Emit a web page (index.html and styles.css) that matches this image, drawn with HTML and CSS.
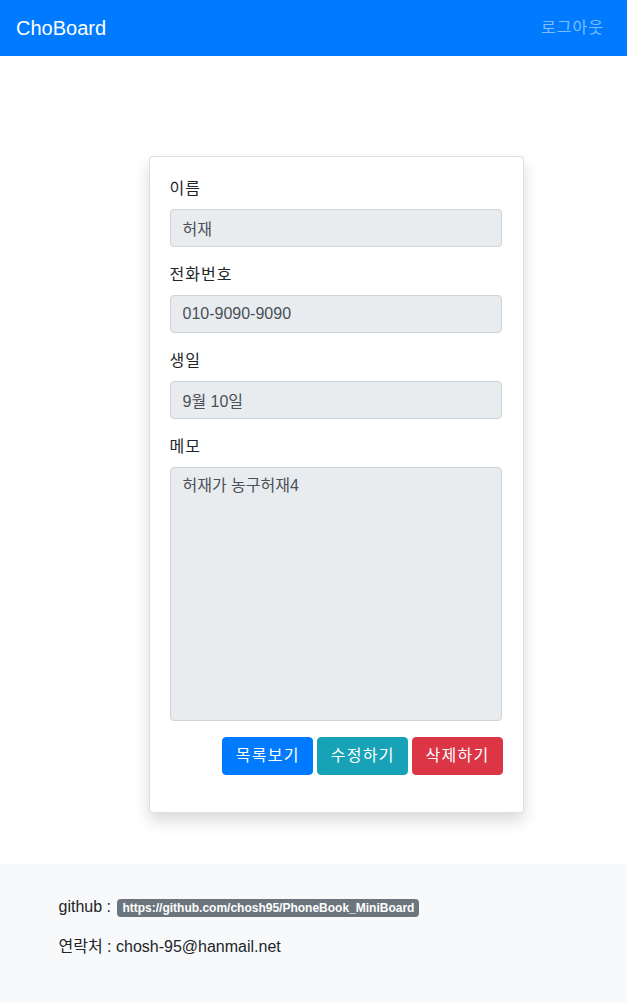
FILE: index.html
```html
<!DOCTYPE html>
<html lang="ko">
<head>
<meta charset="utf-8">
<title>ChoBoard</title>
<link rel="stylesheet" href="styles.css">
</head>
<body>
<nav class="navbar">
  <a class="brand" href="#">ChoBoard</a>
  <a class="nav-link" href="#">로그아웃</a>
</nav>

<main class="container">
  <div class="card">
    <div class="card-body">
      <div class="form-group">
        <label class="label">이름</label>
        <input class="form-control" type="text" value="허재" readonly>
      </div>
      <div class="form-group">
        <label class="label">전화번호</label>
        <input class="form-control" type="text" value="010-9090-9090" readonly>
      </div>
      <div class="form-group">
        <label class="label">생일</label>
        <input class="form-control" type="text" value="9월 10일" readonly>
      </div>
      <div class="form-group">
        <label class="label">메모</label>
        <textarea class="form-control memo" rows="10" readonly>허재가 농구허재4</textarea>
      </div>
      <div class="actions">
        <a class="btn btn-primary" href="#">목록보기</a>
        <a class="btn btn-info" href="#">수정하기</a>
        <a class="btn btn-danger" href="#">삭제하기</a>
      </div>
    </div>
  </div>
</main>

<footer class="footer">
  <div class="footer-inner">
    <p class="footer-line">github : <span class="badge">https://github.com/chosh95/PhoneBook_MiniBoard</span></p>
    <p class="footer-line">연락처 : chosh-95@hanmail.net</p>
  </div>
</footer>
</body>
</html>
```

FILE: styles.css
```css
* { box-sizing: border-box; }

html, body {
  margin: 0;
  padding: 0;
}

body {
  font-family: "Liberation Sans", "Noto Sans CJK KR", sans-serif;
  font-size: 16px;
  line-height: 1.5;
  color: #212529;
  background: #fff;
}

a { text-decoration: none; }

.navbar {
  display: flex;
  justify-content: space-between;
  align-items: center;
  background: #007bff;
  padding: 8px 16px;
  height: 56px;
}

.brand {
  color: #fff;
  font-size: 20px;
  line-height: 30px;
  padding: 5px 0;
}

.nav-link {
  color: rgba(255, 255, 255, 0.5);
  padding: 8px 7px 8px 8px;
  line-height: 24px;
  letter-spacing: 1px;
}

.container {
  width: 540px;
  margin: 100px auto 0;
  padding: 0 15px;
}

.card {
  width: 375px;
  margin-left: 90px;
  background: #fff;
  border: 1px solid rgba(0, 0, 0, 0.125);
  border-radius: 4px;
  box-shadow: 0 8px 16px rgba(0, 0, 0, 0.15);
}

.card-body {
  padding: 20px 21px 20px 20px;
}

.form-group {
  margin-bottom: 16px;
}

.label {
  display: block;
  margin-bottom: 8px;
  line-height: 24px;
  letter-spacing: 1px;
}

.form-control {
  display: block;
  width: 100%;
  height: 38px;
  padding: 6px 12px;
  font-family: inherit;
  font-size: 16px;
  line-height: 24px;
  color: #495057;
  background: #e9ecef;
  border: 1px solid #ced4da;
  border-radius: 4px;
  margin: 0;
  outline: none;
}

.memo {
  height: 254px;
  resize: none;
  overflow: auto;
}

.actions {
  display: flex;
  justify-content: flex-end;
  gap: 4px;
  margin-right: -1px;
  margin-bottom: 17px;
}

.btn {
  display: inline-block;
  padding: 6px 12px 6px 13px;
  font-size: 16px;
  line-height: 24px;
  color: #fff;
  border: 1px solid transparent;
  border-radius: 4px;
  letter-spacing: 1.25px;
}

.btn-primary { background: #007bff; border-color: #007bff; }
.btn-info { background: #17a2b8; border-color: #17a2b8; }
.btn-danger { background: #dc3545; border-color: #dc3545; }

.footer {
  margin-top: 51px;
  background: #f8f9fa;
  padding: 31px 0 48px;
}

.footer-inner {
  width: 540px;
  margin: 0 auto;
  padding: 0 15px;
}

.footer-line {
  margin: 0 0 16px;
  line-height: 24px;
}

.badge {
  display: inline-block;
  margin-left: 2px;
  padding: 3px 5px;
  font-size: 12px;
  font-weight: 700;
  line-height: 1;
  color: #fff;
  background: #6c757d;
  border-radius: 4px;
  vertical-align: baseline;
}
```
